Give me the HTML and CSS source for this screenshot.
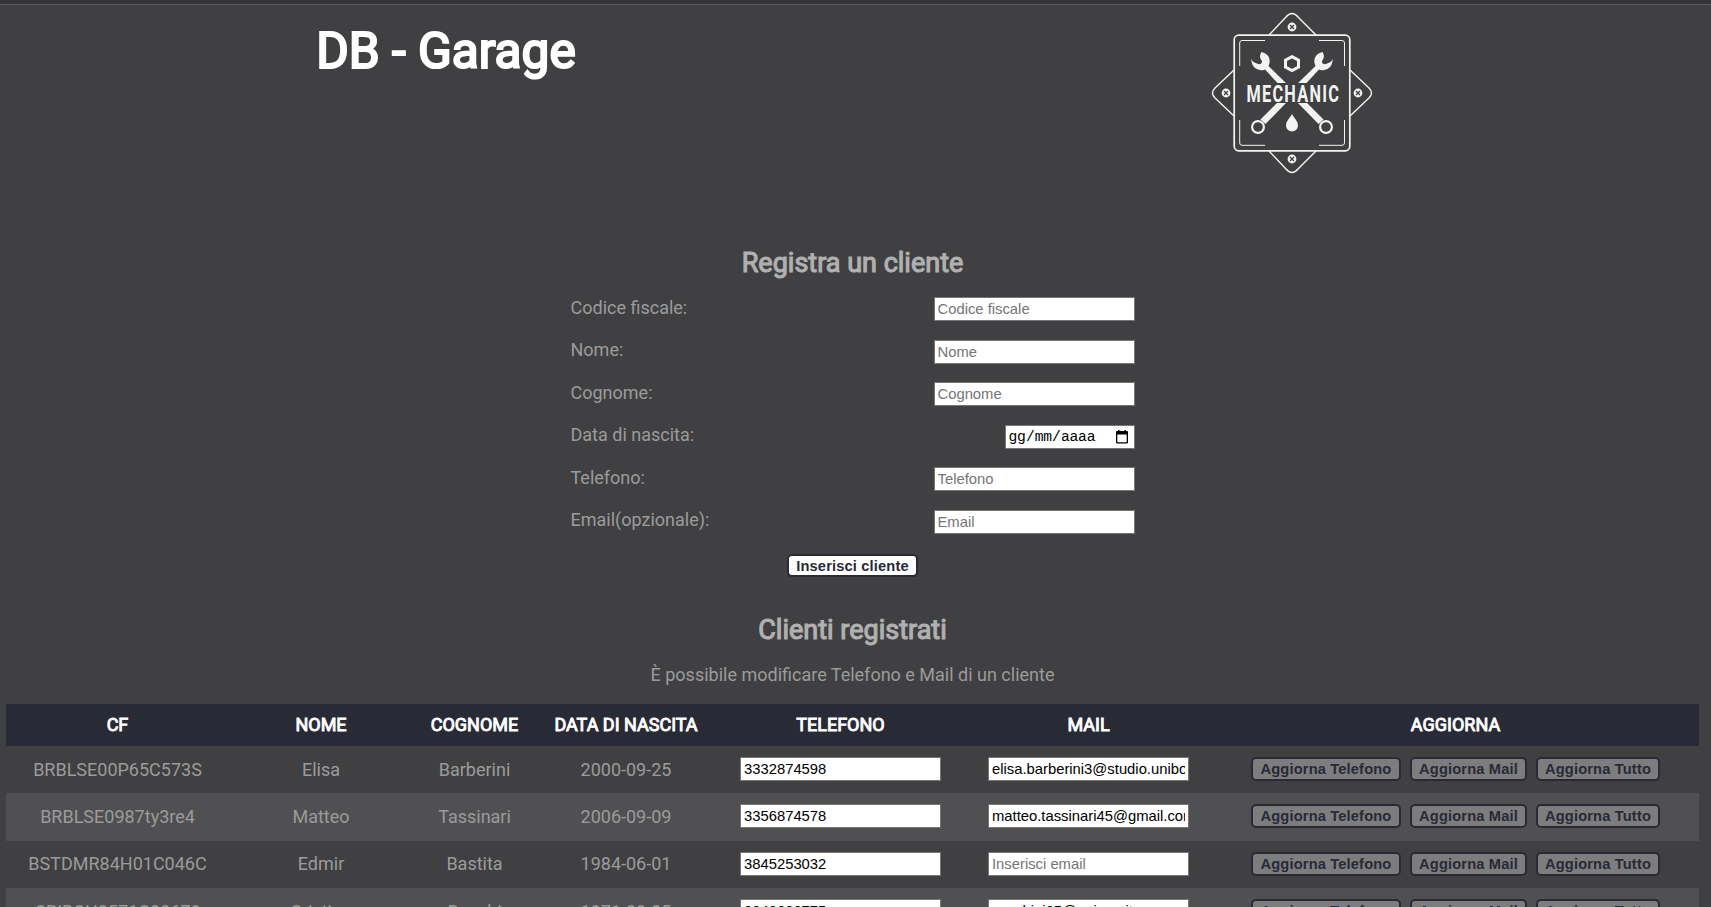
FILE: index.html
```html
<!DOCTYPE html>
<html lang="it">
<head>
<meta charset="utf-8">
<title>DB - Garage</title>
<link rel="stylesheet" href="styles.css">
</head>
<body>
<div class="topline"></div>
<header class="header">
  <h1 class="title"><span>DB - Garage</span></h1>
  <svg class="logo" viewBox="0 0 190 190" fill="none" stroke="#f1f4f1" stroke-width="1.4">
    <path d="M69 35 L86 17 Q92 10 98 17 L116 35 M69 151 L86 169 Q92 176 98 169 L116 151 M34 70 L15 88 Q10 93 15 98 L34 116 M150 70 L169 88 Q174 93 169 98 L150 116"/>
    <rect x="34.2" y="35.2" width="115.6" height="115.6" rx="4.5" stroke-width="1.7"/>
    <path d="M65 40.5 H42 Q39.700 40.500 39.700 43 V66 M119 40.500 H142 Q144.500 40.500 144.500 43 V66 M39.700 120 V143 Q39.700 145.300 42 145.300 H65 M144.500 120 V143 Q144.500 145.300 142 145.300 H119" stroke-width="1"/>
    <g stroke="none" fill="#f1f4f1">
      <circle cx="92" cy="27" r="4.400"/><circle cx="92" cy="159" r="4.400"/><circle cx="26" cy="93" r="4.400"/><circle cx="158" cy="93" r="4.400"/>
    </g>
    <path stroke="#404042" stroke-width="1.300" d="M90 25l4 4m0-4l-4 4M90 157l4 4m0-4l-4 4M24 91l4 4m0-4l-4 4M156 91l4 4m0-4l-4 4"/>
    <path stroke-width="3" d="M92 56.600l6.500 3.500v7l-6.500 3.500-6.500-3.500v-7z"/>
    <g id="tools">
      <path stroke="none" fill="#f1f4f1" d="M61.500 52 C59.500 55 59.500 58 62 61 C62.500 63.500 59.500 65.500 57 63.500 C54 63 52 61 51.500 59 C51 64 54 69.500 60 70 C62 70.500 64 70 65 69.500 L77.500 83 H86 L68.500 66 C71 61 70 54 61.500 52Z"/>
      <path stroke="none" fill="#f1f4f1" d="M77 103 H86 L65.500 124 L60.500 119.500Z"/>
      <circle cx="58" cy="127" r="5.900" stroke-width="2.200" fill="#404042"/>
    </g>
    <use href="#tools" transform="translate(184 0) scale(-1 1)"/>
    <path stroke="none" fill="#f1f4f1" d="M92 114 C90 118 86 121 86 125.500 A6 6 0 0 0 98 125.500 C98 121 94 118 92 114Z"/>
    <text class="logo-text" transform="translate(46.500 101.500) scale(0.680 1)" textLength="136" lengthAdjust="spacing">MECHANIC</text>
  </svg>
</header>
<main>
  <section class="register">
    <h2 class="heading">Registra un cliente</h2>
    <form class="form">
      <label class="field">Codice fiscale:<input class="input" placeholder="Codice fiscale"></label>
      <label class="field">Nome:<input class="input" placeholder="Nome"></label>
      <label class="field">Cognome:<input class="input" placeholder="Cognome"></label>
      <label class="field">Data di nascita:<span class="input date"><span class="date-text"><span>gg</span><span class="sep">/</span><span>mm</span><span class="sep">/</span><span>aaaa</span></span>
        <svg class="calendar" viewBox="0 0 12 14"><path fill="#000" fill-rule="evenodd" d="M2 0h1.500v1h5V0H10v1h1q1 0 1 1v10.500q0 1-1 1H1q-1 0-1-1V2q0-1 1-1h1zM1.300 4.500v7.700h9.400V4.500z"/></svg></span></label>
      <label class="field">Telefono:<input class="input" placeholder="Telefono"></label>
      <label class="field">Email(opzionale):<input class="input" placeholder="Email"></label>
      <button class="button insert" type="button">Inserisci cliente</button>
    </form>
  </section>
  <section class="clients">
    <h2 class="heading">Clienti registrati</h2>
    <p class="note">È possibile modificare Telefono e Mail di un cliente</p>
    <table class="table">
      <colgroup><col class="c-cf"><col class="c-name"><col class="c-surname"><col class="c-date"><col class="c-phone"><col class="c-mail"><col></colgroup>
      <thead><tr><th>CF</th><th>NOME</th><th>COGNOME</th><th>DATA DI NASCITA</th><th>TELEFONO</th><th>MAIL</th><th>AGGIORNA</th></tr></thead>
      <tbody>
        <tr><td>BRBLSE00P65C573S</td><td>Elisa</td><td>Barberini</td><td>2000-09-25</td><td><input class="input" value="3332874598"></td><td><input class="input" value="elisa.barberini3@studio.unibo.it"></td><td><div class="actions"><button class="button phone" disabled>Aggiorna Telefono</button><button class="button mail" disabled>Aggiorna Mail</button><button class="button all" disabled>Aggiorna Tutto</button></div></td></tr>
        <tr><td>BRBLSE0987ty3re4</td><td>Matteo</td><td>Tassinari</td><td>2006-09-09</td><td><input class="input" value="3356874578"></td><td><input class="input" value="matteo.tassinari45@gmail.com"></td><td><div class="actions"><button class="button phone" disabled>Aggiorna Telefono</button><button class="button mail" disabled>Aggiorna Mail</button><button class="button all" disabled>Aggiorna Tutto</button></div></td></tr>
        <tr><td>BSTDMR84H01C046C</td><td>Edmir</td><td>Bastita</td><td>1984-06-01</td><td><input class="input" value="3845253032"></td><td><input class="input" placeholder="Inserisci email"></td><td><div class="actions"><button class="button phone" disabled>Aggiorna Telefono</button><button class="button mail" disabled>Aggiorna Mail</button><button class="button all" disabled>Aggiorna Tutto</button></div></td></tr>
        <tr><td>CRIBCH0571C08678</td><td>Cristina</td><td>Bacchi</td><td>1971-09-25</td><td><input class="input" value="3348602775"></td><td><input class="input" value="cocchini65@unigua.it"></td><td><div class="actions"><button class="button phone" disabled>Aggiorna Telefono</button><button class="button mail" disabled>Aggiorna Mail</button><button class="button all" disabled>Aggiorna Tutto</button></div></td></tr>
      </tbody>
    </table>
  </section>
</main>
</body>
</html>
```
FILE: styles.css
```css
* { box-sizing: border-box; }
html { height: 100%; overflow: hidden; }
body {
  margin: 0;
  height: 907px;
  overflow: hidden;
  background: #404042;
  color: #9b9b9b;
  font: 18px/21px Roboto, sans-serif;
}
.topline { height: 5px; background: #35363a; border-bottom: 1px solid #5b5c60; }
.header { display: flex; height: 235px; }
.title {
  width: 892px;
  margin: 15px 0 0;
  text-align: center;
  color: #fff;
  font-size: 49.6px;
  line-height: 62px;
  font-weight: 400;
  -webkit-text-stroke: 2.2px #fff;
}
.logo { width: 190px; height: 190px; margin: -5px 0 0 308px; }
.logo-text { font: bold 24px Roboto, sans-serif; fill: #f1f4f1; stroke: none; }
.heading {
  margin: 0;
  color: #b0b0b0;
  text-align: center;
  font-size: 27px;
  line-height: 34px;
  font-weight: 400;
  -webkit-text-stroke: 1.1px #b0b0b0;
}
.register, .clients { width: 1705px; }
.register { padding-top: 6px; height: 373px; }
.form { width: 564px; margin: 6px auto 0; display: flex; flex-direction: column; align-items: center; }
.field { display: flex; width: 100%; height: 42.5px; align-items: center; justify-content: space-between; }
.input {
  display: block;
  width: 201px;
  height: 24px;
  margin: 4px 0 0;
  padding: 1px 3px;
  border: 1px solid #767676;
  background: #fff;
  color: #000;
  font: 14.8px/18px "Liberation Sans", Arial, sans-serif;
}
.input::placeholder { color: #757575; }
.date { display: flex; justify-content: space-between; align-items: center; width: 130px; padding-right: 6px; font-family: "Liberation Mono", monospace; font-size: 14.667px; }
.date-text { display: flex; letter-spacing: -0.2px; }
.sep { width: 9px; text-align: center; }
.calendar { width: 12px; height: 14px; }
.button {
  height: 24px;
  padding: 0;
  border: 2px solid #282a35;
  border-radius: 5px;
  background: #fff;
  color: #282a35;
  font: bold 14.667px/18px "Liberation Sans", Arial, sans-serif;
  letter-spacing: 0.15px;
  white-space: nowrap;
}
.insert { width: 131px; height: 23px; margin-top: 13px; letter-spacing: 0.15px; }
.note { margin: 17px 0 19px; text-align: center; }
.table { width: 1693px; margin-left: 6px; border-collapse: collapse; table-layout: fixed; text-align: center; }
.c-cf { width: 223px; }
.c-name { width: 184px; }
.c-surname { width: 123px; }
.c-date { width: 180px; }
.c-phone { width: 249px; }
.c-mail { width: 247px; }
.table th { height: 42px; padding: 0 0 2px; background: #282a35; color: #fff; font-weight: 400; -webkit-text-stroke: 0.9px #fff; }
.table td { height: 47.33px; padding: 0 0 1px; }
.table td .input { margin: 0 auto; }
.table tbody tr:nth-child(even) { background: #505052; }
.actions { display: flex; justify-content: center; gap: 9px; }
.actions .button { background: #7d7d7f; }
.phone { width: 150px; }
.mail { width: 117px; }
.all { width: 124px; }
```
